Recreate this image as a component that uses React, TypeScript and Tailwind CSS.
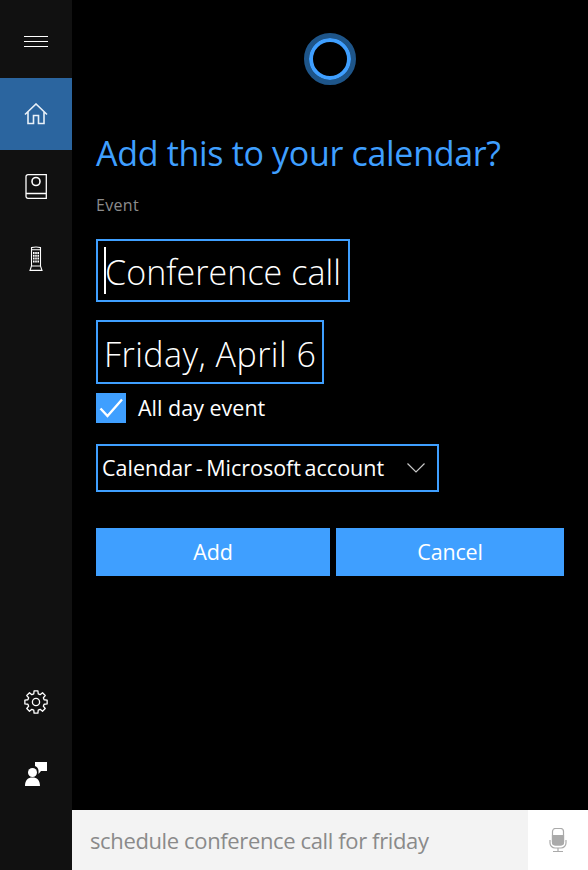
const font = { fontFamily: '"Open Sans", "Noto Sans", sans-serif' };

function NavIcon({ children, active }: { children: React.ReactNode; active?: boolean }) {
  return (
    <div className={`flex h-[72px] w-[72px] items-center justify-center ${active ? 'bg-[#2b659f]' : ''}`}>
      {children}
    </div>
  );
}

// 8 tooth gear outline, centre 12,12
function gearPath() {
  const pts: string[] = [];
  for (let i = 0; i < 8; i++) {
    const a = (i * Math.PI) / 4;
    const at = (r: number, off: number) =>
      `${(12 + r * Math.cos(a + off)).toFixed(2)} ${(12 + r * Math.sin(a + off)).toFixed(2)}`;
    pts.push(at(8.4, -0.27), at(11.3, -0.17), at(11.3, 0.17), at(8.4, 0.27));
  }
  return `M${pts.join('L')}Z`;
}

export default function App() {
  return (
    <div className="flex h-[870px] w-[588px] flex-col overflow-hidden bg-black font-['Open_Sans',sans-serif] text-white">
      <div className="flex min-h-0 flex-1">
        <aside className="flex w-[72px] flex-col justify-between bg-[#111111] pt-[6px]">
          <div>
            <NavIcon>
              <svg width="24" height="12" viewBox="0 0 24 12" stroke="white" strokeWidth="1">
                <path d="M0 .5h24M0 5.5h24M0 10.5h24" />
              </svg>
            </NavIcon>
            <NavIcon active>
              <svg width="24" height="22" viewBox="0 0 24 22" fill="none" stroke="#e8f0f8" strokeWidth="1.6">
                <path d="M1 11.5 12 1l11 10.500M4 9v11.500h5.500v-8h5v8H20V9" />
              </svg>
            </NavIcon>
            <NavIcon>
              <svg width="22" height="25" viewBox="0 0 22 25" fill="none" stroke="white" strokeWidth="1.300">
                <path d="M3 .7h18.300v23.600H3a2 2 0 0 1-2-2V2.700a2 2 0 0 1 2-2ZM1 19.500h20.300" />
                <circle cx="11" cy="7.500" r="4" strokeWidth="1.600" />
              </svg>
            </NavIcon>
            <NavIcon>
              <svg width="14" height="25" viewBox="0 0 14 25" fill="none" stroke="white" strokeWidth="1.100">
                <path d="M2.500 20V1.600Q7 .4 11.500 1.600V20M2.500 20 1 24.400h12L11.500 20ZM2.500 3.800h9M2.500 20h9" />
                <path d="M4 6h1.600v2H4zM6.200 6h1.600v2H6.200zM8.400 6h1.600v2H8.400zM4 8.800h1.600v2H4zM6.200 8.800h1.600v2H6.200zM8.400 8.800h1.600v2H8.400zM4 11.600h1.600v2H4zM6.200 11.600h1.600v2H6.200zM8.400 11.600h1.600v2H8.400zM4 14.400h1.600v2H4zM6.200 14.400h1.600v2H6.200zM8.400 14.400h1.600v2H8.400z" fill="white" stroke="none" />
              </svg>
            </NavIcon>
          </div>
          <div>
            <NavIcon>
              <svg width="24" height="24" viewBox="0 0 24 24" fill="none" stroke="white" strokeWidth="1.300" strokeLinejoin="round">
                <path d={gearPath()} />
                <circle cx="12" cy="12" r="3.600" />
              </svg>
            </NavIcon>
            <NavIcon>
              <svg width="22" height="24" viewBox="0 0 22 24" fill="white">
                <circle cx="7.500" cy="10.500" r="4.500" />
                <path d="M0 24c0-6 3-8.500 7.500-8.500S15 18 15 24ZM10 0h12v9h-6l-2.500 3v-3.500a5.500 5.500 0 0 0-3.500-4.500Z" />
              </svg>
            </NavIcon>
          </div>
        </aside>

        <main className="flex flex-1 flex-col pl-6 pr-6" style={font}>
          <div className="mt-[33px] ml-[208px] flex h-[52px] w-[52px] items-center justify-center rounded-full border-[5px] border-[#1e5589]">
            <div className="h-[42px] w-[42px] shrink-0 rounded-full border-[4px] border-[#3f9fff]" />
          </div>
          <h1 className="mt-[42px] text-[34px] leading-[52px] tracking-[-0.32px] text-[#3f9fff]">Add this to your calendar?</h1>
          <p className="mt-[14px] text-[16px] leading-[24px] tracking-[0.3px] text-[#8c8c8c]">Event</p>
          <div className="mt-[22px] flex h-[63px] w-[254px] items-center border-2 border-[#3f9fff] pl-[6px]">
            <span className="h-[47px] w-[2px] shrink-0 bg-white" />
            <span className="-ml-[1px] pt-[4px] text-[34px] font-light tracking-[0.05px] whitespace-nowrap">Conference call</span>
          </div>
          <div className="mt-[18px] flex h-[64px] w-[228px] items-center border-2 border-[#3f9fff] pl-[6px]">
            <span className="pt-[5px] text-[34px] font-light tracking-[0.45px] whitespace-nowrap">Friday, April 6</span>
          </div>
          <div className="mt-[9px] flex h-[30px] items-center">
            <div className="flex h-[30px] w-[30px] items-center justify-center bg-[#3f9fff]">
              <svg width="24" height="20" viewBox="0 0 24 20" fill="none" stroke="white" strokeWidth="2.400">
                <path d="M1.500 10.500 8.500 18 23 1.500" />
              </svg>
            </div>
            <span className="ml-3 text-[21.500px]">All day event</span>
          </div>
          <div className="mt-[21px] flex h-[48px] w-[343px] items-center justify-between border-2 border-[#3f9fff] pl-[4px] pr-[12px]">
            <span className="pt-[1px] text-[21.500px] [word-spacing:-2px] whitespace-nowrap">Calendar - Microsoft account</span>
            <svg width="18" height="10" viewBox="0 0 18 10" fill="none" stroke="#c8c8c8" strokeWidth="1.200">
              <path d="M.5.500 9 9l8.500-8.500" />
            </svg>
          </div>
          <div className="mt-9 flex gap-[6px]">
            <button className="h-[48px] w-[234px] bg-[#3f9fff] pt-[1px] text-[21.500px] tracking-[-0.2px]">Add</button>
            <button className="h-[48px] w-[228px] bg-[#3f9fff] pt-[1px] text-[21.500px] tracking-[-0.2px]">Cancel</button>
          </div>
        </main>
      </div>

      <div className="flex h-[60px] shrink-0 bg-[#111111] pl-[72px]" style={font}>
        <div className="flex flex-1 items-center bg-[#f3f3f3] pl-[18px] text-[22px] tracking-[-0.37px] text-[#8a8a8a] whitespace-nowrap">
          schedule conference call for friday
        </div>
        <div className="flex w-[60px] items-center justify-center bg-white">
          <svg width="18" height="24" viewBox="0 0 18 24" fill="none" stroke="#aaaaaa" strokeWidth="1.200">
            <rect x="3.500" y="0.500" width="11" height="16.500" rx="3" fill="white" />
            <path d="M3.500 7.500h11V14a3 3 0 0 1-3 3h-5a3 3 0 0 1-3-3Z" fill="#aaaaaa" />
            <path d="M1 12v3a5 5 0 0 0 5 5h6a5 5 0 0 0 5-5v-3M9 20v3.500M4 23.500h10" />
          </svg>
        </div>
      </div>
    </div>
  );
}
